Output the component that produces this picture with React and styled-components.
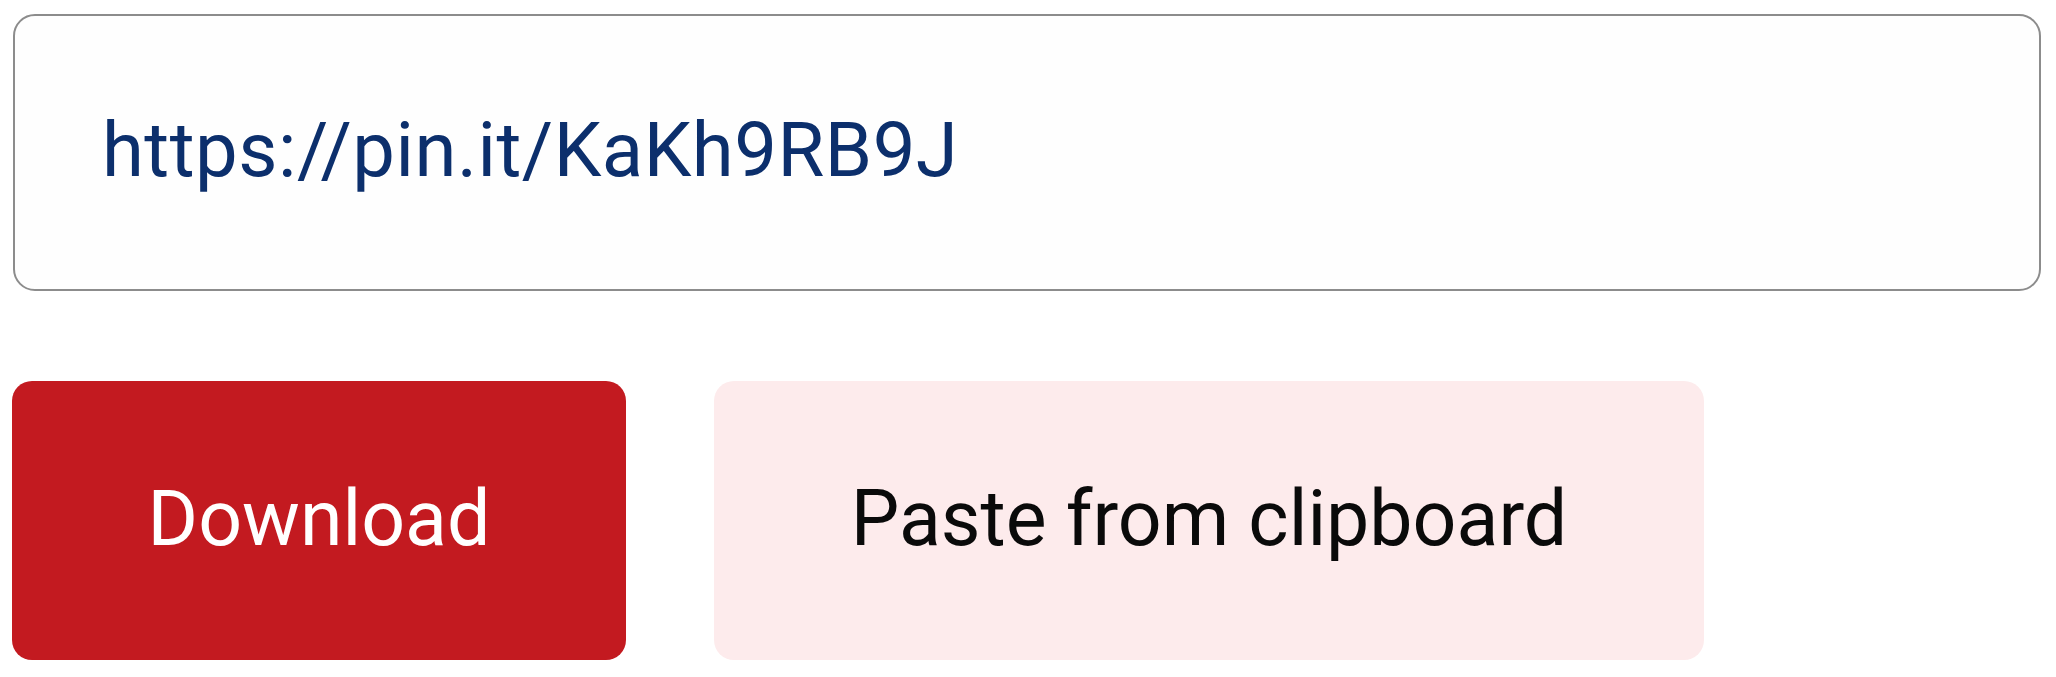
import React from 'react';
import styled, { createGlobalStyle } from 'styled-components';

const GlobalStyle = createGlobalStyle`
  html, body {
    margin: 0;
    padding: 0;
    background: #ffffff;
  }
  * {
    box-sizing: border-box;
  }
`;

const Page = styled.div`
  padding: 14px 15px 0 13px;
  font-family: Roboto, "Liberation Sans", sans-serif;
`;

const UrlField = styled.div`
  display: flex;
  align-items: center;
  height: 277px;
  padding: 0 0 6px 87px;
  border: 2px solid #8c8c8c;
  border-radius: 22px;
  background: #fefefe;
  color: #0c2f6c;
  font-size: 76px;
  letter-spacing: 0.5px;
`;

const Actions = styled.div`
  display: flex;
  gap: 88px;
  margin-top: 90px;
  margin-left: -1px;
`;

const Button = styled.button`
  display: flex;
  align-items: center;
  justify-content: center;
  width: ${p => p.width}px;
  height: 279px;
  padding: 0 0 4px;
  border: none;
  border-radius: 20px;
  background: ${p => (p.primary ? '#c31a20' : '#fdebec')};
  color: ${p => (p.primary ? '#ffffff' : '#0a0a0a')};
  font-family: Roboto, "Liberation Sans", sans-serif;
  font-size: 77px;
  cursor: pointer;
`;

const App = () => (
  <Page>
    <GlobalStyle />
    <UrlField>https://pin.it/KaKh9RB9J</UrlField>
    <Actions>
      <Button primary width={614}>
        Download
      </Button>
      <Button width={990}>Paste from clipboard</Button>
    </Actions>
  </Page>
);

export default App;
